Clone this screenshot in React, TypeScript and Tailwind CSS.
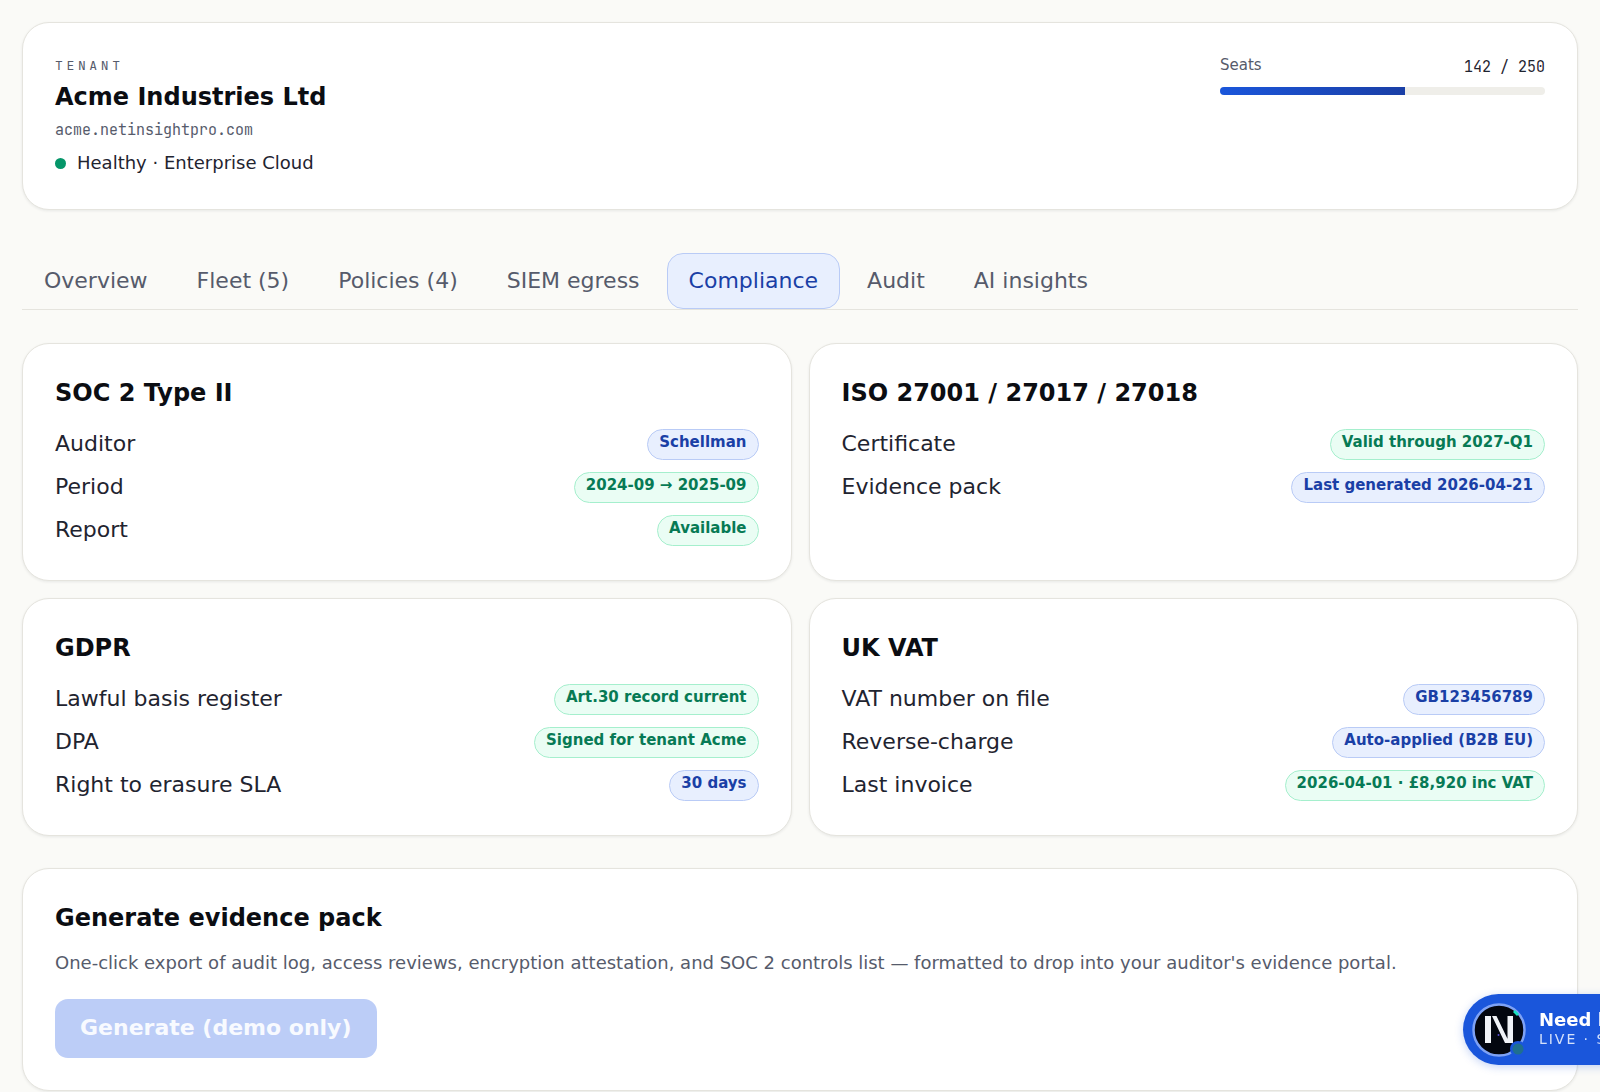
import { ReactNode } from 'react';

type Tone = 'info' | 'ok';

interface Row {
    label: string;
    value: string;
    tone: Tone;
}

interface Section {
    title: string;
    rows: Row[];
}

const tabs = ['Overview', 'Fleet (5)', 'Policies (4)', 'SIEM egress', 'Compliance', 'Audit', 'AI insights'];
const activeTab = 'Compliance';

const seats = { used: 142, total: 250 };

const sections: Section[] = [
    {
        title: 'SOC 2 Type II',
        rows: [
            { label: 'Auditor', value: 'Schellman', tone: 'info' },
            { label: 'Period', value: '2024-09 → 2025-09', tone: 'ok' },
            { label: 'Report', value: 'Available', tone: 'ok' },
        ],
    },
    {
        title: 'ISO 27001 / 27017 / 27018',
        rows: [
            { label: 'Certificate', value: 'Valid through 2027-Q1', tone: 'ok' },
            { label: 'Evidence pack', value: 'Last generated 2026-04-21', tone: 'info' },
        ],
    },
    {
        title: 'GDPR',
        rows: [
            { label: 'Lawful basis register', value: 'Art.30 record current', tone: 'ok' },
            { label: 'DPA', value: 'Signed for tenant Acme', tone: 'ok' },
            { label: 'Right to erasure SLA', value: '30 days', tone: 'info' },
        ],
    },
    {
        title: 'UK VAT',
        rows: [
            { label: 'VAT number on file', value: 'GB123456789', tone: 'info' },
            { label: 'Reverse-charge', value: 'Auto-applied (B2B EU)', tone: 'info' },
            { label: 'Last invoice', value: '2026-04-01 · £8,920 inc VAT', tone: 'ok' },
        ],
    },
];

const toneClasses: Record<Tone, string> = {
    info: 'bg-[#e8effe] border-[#b9cbf6] text-[#1a3fa6]',
    ok: 'bg-[#eafdf4] border-[#a5efcd] text-[#077a55]',
};

const Card = ({ children }: { children: ReactNode }) => (
    <section className="rounded-[27px] border border-[#e5e4de] bg-white p-8 shadow-[0_1px_3px_rgba(15,23,42,0.08)]">
        {children}
    </section>
);

const CardTitle = ({ children }: { children: ReactNode }) => (
    <h2 className="text-2xl leading-[34px] font-bold text-[#0b0d12]">{children}</h2>
);

const Pill = ({ tone, children }: { tone: Tone; children: ReactNode }) => (
    <span className={`rounded-full border px-[11px] pt-[2px] pb-[7px] text-[15px] leading-5 font-bold ${toneClasses[tone]}`}>
        {children}
    </span>
);

const ComplianceCard = ({ title, rows }: Section) => (
    <Card>
        <CardTitle>{title}</CardTitle>
        <dl className="mt-[18px] flex flex-col gap-[11px] pb-[2px]">
            {rows.map((row) => (
                <div key={row.label} className="flex items-center justify-between">
                    <dt className="text-[22px] leading-8 text-[#1f2430]">{row.label}</dt>
                    <dd className="flex">
                        <Pill tone={row.tone}>{row.value}</Pill>
                    </dd>
                </div>
            ))}
        </dl>
    </Card>
);

const TenantHeader = () => (
    <Card>
        <div className="flex items-start justify-between">
            <div>
                <p className="font-[JetBrains_Mono,Liberation_Mono,monospace] text-[13px] leading-[22px] tracking-[0.28em] text-[#565b6b]">TENANT</p>
                <h1 className="mt-1 text-2xl font-bold text-[#0b0d12]">Acme Industries Ltd</h1>
                <p className="mt-[5px] font-[JetBrains_Mono,Liberation_Mono,monospace] text-[15px] leading-6 text-[#565b6b]">acme.netinsightpro.com</p>
                <p className="mt-[7px] flex items-center gap-[11px] text-lg leading-7 text-[#1f2430]">
                    <span className="size-[11px] rounded-full bg-[#059669]" />
                    Healthy · Enterprise Cloud
                </p>
            </div>
            <div className="w-[325px]">
                <div className="flex h-[22px] items-end justify-between">
                    <span id="seats" className="text-[15px] leading-6 text-[#565b6b]">Seats</span>
                    <span className="font-[JetBrains_Mono,Liberation_Mono,monospace] text-[15px] leading-5 text-[#1f2430]">
                        {seats.used} / {seats.total}
                    </span>
                </div>
                <div
                    role="progressbar"
                    aria-labelledby="seats"
                    aria-valuenow={seats.used}
                    aria-valuemax={seats.total}
                    className="mt-[10px] h-2 overflow-hidden rounded-full bg-[#efeee9]"
                >
                    <div
                        className="h-full bg-linear-to-r from-[#1a56db] to-[#1a3fa6]"
                        style={{ width: `${(seats.used / seats.total) * 100}%` }}
                    />
                </div>
            </div>
        </div>
    </Card>
);

const Tabs = () => (
    <nav role="tablist" className="mt-[43px] flex gap-[5px] border-b border-[#e5e4de]">
        {tabs.map((tab) => (
            <button
                key={tab}
                type="button"
                role="tab"
                aria-selected={tab === activeTab}
                className={`rounded-2xl border px-[21px] py-[11px] text-[22px] leading-8 ${
                    tab === activeTab
                        ? 'border-[#b9cbf6] bg-[#e8effe] text-[#1a3fa6]'
                        : 'border-transparent text-[#565b6b]'
                }`}
            >
                {tab}
            </button>
        ))}
    </nav>
);

const ChatLogo = () => (
    <svg viewBox="0 0 54 54" className="size-[54px] shrink-0" aria-hidden="true">
        <circle cx="27" cy="27" r="25.5" fill="#03060f" stroke="#7ea2f5" strokeWidth="2.5" />
        <path d="M13 13h6v27h-6zM35.5 13h5.5v27h-5.5zM20 13h4.5l13 27h-4.5z" fill="#f1f3f8" />
        <path d="M41 9l2-2 4 4-2 2z" fill="#19e3c0" />
        <circle cx="26.5" cy="32" r="1" fill="#5b4fd6" />
        <circle cx="46" cy="46" r="8" fill="#1a56db" />
        <circle cx="46" cy="46" r="5.5" fill="#1f6f8f" />
    </svg>
);

const App = () => (
    <div className="min-h-screen overflow-x-clip bg-[#fafaf7] px-[22px] pt-[22px] font-[DejaVu_Sans,sans-serif]">
        <TenantHeader />
        <Tabs />
        <main className="mt-[33px] flex flex-col gap-8">
            <div className="grid grid-cols-2 gap-[17px]">
                {sections.map((section) => (
                    <ComplianceCard key={section.title} {...section} />
                ))}
            </div>
            <Card>
                <CardTitle>Generate evidence pack</CardTitle>
                <p className="mt-[14px] text-lg leading-7 text-[#565b6b]">
                    One-click export of audit log, access reviews, encryption attestation, and SOC 2 controls list — formatted to drop
                    into your auditor's evidence portal.
                </p>
                <button
                    type="button"
                    disabled
                    className="mt-[22px] rounded-[13px] bg-[#bccdf7] px-[25px] pt-[13px] pb-[14px] text-[22px] leading-8 font-bold text-[#f8faff]"
                >
                    Generate (demo only)
                </button>
            </Card>
        </main>
        <button
            type="button"
            className="fixed -right-[100px] bottom-[27px] flex h-[71px] w-[237px] items-center gap-[13px] rounded-full bg-[#1a56db] pl-[9px] text-left whitespace-nowrap text-white shadow-[0_2px_8px_rgba(26,86,219,0.25)]"
        >
            <ChatLogo />
            <span className="flex flex-col pb-[2px]">
                <span className="text-lg leading-5 font-bold">Need help?</span>
                <span className="text-sm leading-[18px] tracking-[0.14em] text-[#d5e1fb]">LIVE · SUPPORT</span>
            </span>
        </button>
    </div>
);

export default App;
